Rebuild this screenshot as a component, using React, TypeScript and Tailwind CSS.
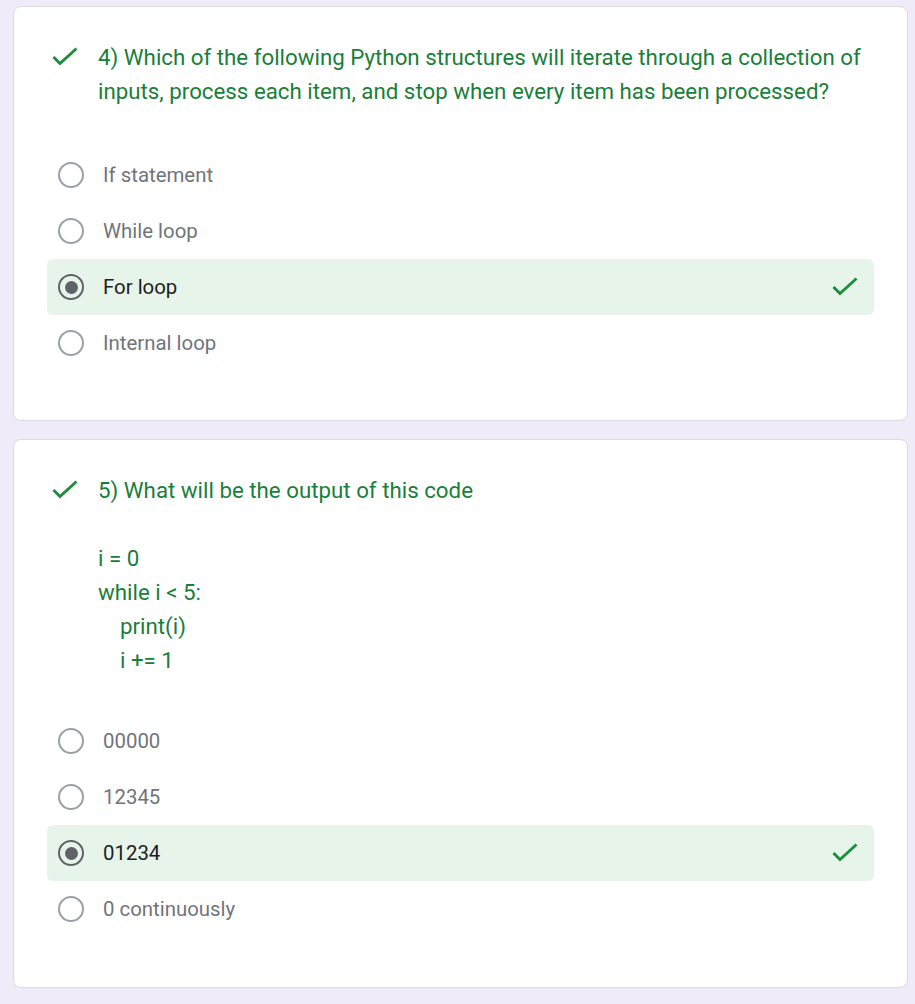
import React from "react";

type Option = { label: string; selected?: boolean };

const QUESTIONS: { lines: string[]; code?: string[]; options: Option[] }[] = [
  {
    lines: [
      "4) Which of the following Python structures will iterate through a collection of",
      "inputs, process each item, and stop when every item has been processed?",
    ],
    options: [
      { label: "If statement" },
      { label: "While loop" },
      { label: "For loop", selected: true },
      { label: "Internal loop" },
    ],
  },
  {
    lines: ["5) What will be the output of this code"],
    code: ["i = 0", "while i < 5:", "   print(i)", "   i += 1"],
    options: [
      { label: "00000" },
      { label: "12345" },
      { label: "01234", selected: true },
      { label: "0 continuously" },
    ],
  },
];

function Check() {
  return (
    <svg width="26" height="20" viewBox="0 0 26 20" fill="none">
      <polyline points="1.5,10 8,16.5 24.5,1.5" stroke="#1e8e3e" strokeWidth="3" />
    </svg>
  );
}

function Radio({ selected }: { selected?: boolean }) {
  return (
    <div
      className={`w-[26px] h-[26px] rounded-full border-2 flex items-center justify-center shrink-0 ${
        selected ? "border-[#5f6368]" : "border-[#9aa0a6]"
      }`}
    >
      {selected && <div className="w-[13px] h-[13px] rounded-full bg-[#5f6368]" />}
    </div>
  );
}

export default function App() {
  return (
    <div
      className="min-h-[1004px] bg-[#f0ebf8] pt-[6px] pb-4 flex flex-col gap-[18px]"
      style={{ fontFamily: "Roboto, 'Liberation Sans', sans-serif" }}
    >
      {QUESTIONS.map((q, qi) => (
        <div
          key={qi}
          className={`ml-[13px] w-[895px] bg-white border border-[#dadce0] rounded-[8px] px-[33px] pt-[33px] ${
            qi === 0 ? "pb-[49px]" : "pb-[50px]"
          }`}
        >
          <div className="flex items-start pl-[5px] gap-[20px]">
            <div className="h-[34px] flex items-center shrink-0">
              <Check />
            </div>
            <div className="text-[22.3px] leading-[34px] text-[#188038]">
              {q.lines.map((l) => (
                <div key={l} className="whitespace-nowrap">{l}</div>
              ))}
              {q.code && (
                <>
                  <div className="h-[34px]" />
                  {q.code.map((c) => (
                    <div key={c} className="whitespace-pre">
                      {c.startsWith("   ") ? <span className="pl-[22px]">{c.trim()}</span> : c}
                    </div>
                  ))}
                </>
              )}
            </div>
          </div>

          <div className={`flex flex-col ${q.code ? "mt-[36px]" : "mt-[39px]"}`}>
            {q.options.map((o) => (
              <div
                key={o.label}
                className={`h-[56px] flex items-center pl-[11px] pr-[16px] rounded-[6px] ${
                  o.selected ? "bg-[#e6f4ea]" : ""
                }`}
              >
                <Radio selected={o.selected} />
                <span
                  className={`ml-[19px] text-[20.4px] flex-1 ${
                    o.selected ? "text-[#202124]" : "text-[#70757a]"
                  }`}
                >
                  {o.label}
                </span>
                {o.selected && <Check />}
              </div>
            ))}
          </div>
        </div>
      ))}
    </div>
  );
}
